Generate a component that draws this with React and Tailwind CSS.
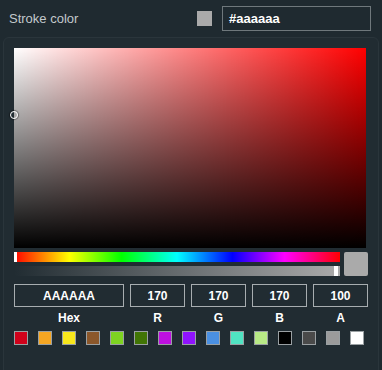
import React from "react";

const presets = [
  "#d0021b",
  "#f5a623",
  "#f8e71c",
  "#8b572a",
  "#7ed321",
  "#417505",
  "#bd10e0",
  "#9013fe",
  "#4a90e2",
  "#50e3c2",
  "#b8e986",
  "#000000",
  "#4a4a4a",
  "#9b9b9b",
  "#ffffff",
];

const fields = [
  { label: "Hex", value: "AAAAAA", wide: true },
  { label: "R", value: "170" },
  { label: "G", value: "170" },
  { label: "B", value: "170" },
  { label: "A", value: "100" },
];

function App() {
  return (
    <div className="h-[370px] w-[382px] overflow-hidden bg-[#1f2a30] font-['Liberation_Sans',Arial,sans-serif]">
      {/* header row */}
      <div className="flex h-[37px] items-center pl-[9px] pr-[11px]">
        <span className="flex-1 text-[13px] text-[#c3c9cc]">Stroke color</span>
        <div className="h-[15px] w-[15px] bg-[#aaaaaa]" />
        <div className="ml-[10px] flex h-[25px] w-[149px] items-center border border-[#6f787c] px-[6px] text-[13px] font-bold text-white">
          #aaaaaa
        </div>
      </div>

      {/* picker panel */}
      <div className="mx-[3px] h-[340px] rounded-md border border-[#2a353b] bg-[#212c32] px-[10px] pt-[10px]">
        {/* saturation */}
        <div className="relative h-[200px] w-[352px] bg-[#ff0000]">
          <div className="absolute inset-0 bg-[linear-gradient(to_right,#fff,rgba(255,255,255,0))]" />
          <div className="absolute inset-0 bg-[linear-gradient(to_top,#000,rgba(0,0,0,0))]" />
          <div className="absolute left-[-4px] top-[63px] h-[8px] w-[8px] rounded-full border-[1.5px] border-white shadow-[0_0_1px_1px_rgba(0,0,0,0.4)]" />
        </div>

        {/* hue + alpha + preview */}
        <div className="mt-[4px] flex gap-[4px]">
          <div className="flex flex-1 flex-col gap-[4px]">
            <div className="relative h-[10px] bg-[linear-gradient(to_right,#f00_0%,#ff0_17%,#0f0_33%,#0ff_50%,#00f_67%,#f0f_83%,#f00_100%)]">
              <div className="absolute left-0 top-0 h-[10px] w-[3px] bg-white" />
            </div>
            <div className="relative h-[10px] bg-[linear-gradient(to_right,rgba(170,170,170,0),#aaaaaa)]">
              <div className="absolute right-[2px] top-0 h-[10px] w-[4px] bg-white" />
            </div>
          </div>
          <div className="h-[24px] w-[24px] rounded-[2px] bg-[#aaaaaa]" />
        </div>

        {/* inputs */}
        <div className="mt-[8px] flex gap-[6px]">
          {fields.map((f) => (
            <div key={f.label} className={f.wide ? "flex-[2]" : "flex-1"}>
              <div className="flex h-[23px] items-center justify-center border border-[#a7adb0] text-[12px] font-bold text-white">
                {f.value}
              </div>
              <div className="mt-[4px] text-center text-[12px] font-bold leading-[14px] text-white">
                {f.label}
              </div>
            </div>
          ))}
        </div>

        {/* preset swatches */}
        <div className="mt-[6px] flex gap-[10px]">
          {presets.map((c) => (
            <div
              key={c}
              className="h-[14px] w-[14px] border border-[#9aa0a3]"
              style={{ backgroundColor: c }}
            />
          ))}
        </div>
      </div>
    </div>
  );
}

export default App;
